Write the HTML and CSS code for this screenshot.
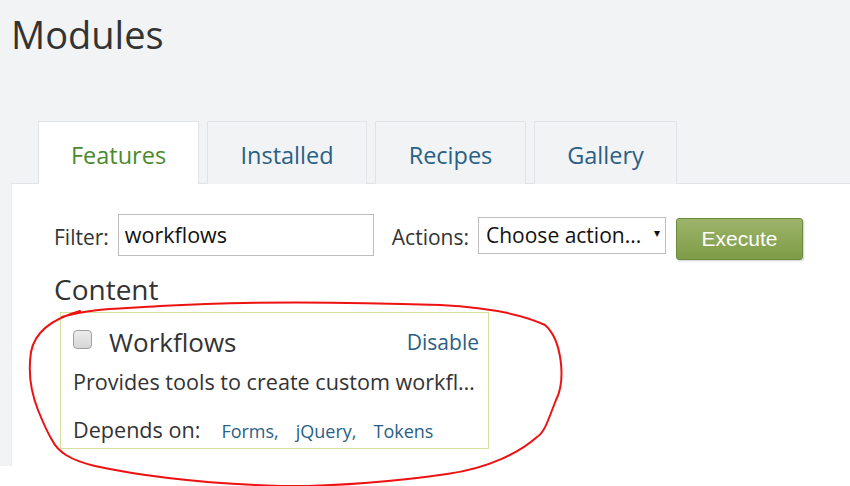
FILE: index.html
```html
<!DOCTYPE html>
<html>
<head>
<meta charset="utf-8">
<link rel="stylesheet" href="styles.css">
</head>
<body>
<div class="page">
  <h1 class="title">Modules</h1>
  <ul class="tabs">
    <li class="tab tab-features active">Features</li>
    <li class="tab tab-installed">Installed</li>
    <li class="tab tab-recipes">Recipes</li>
    <li class="tab tab-gallery">Gallery</li>
  </ul>
  <div class="panel">
    <div class="toolbar">
      <label class="lbl">Filter:</label>
      <div class="input">workflows</div>
      <label class="lbl lbl-actions">Actions:</label>
      <div class="select"><span>Choose action...</span><span class="caret">&#9662;</span></div>
      <button class="btn">Execute</button>
    </div>
    <h2 class="cat">Content</h2>
    <div class="card">
      <div class="card-head">
        <span class="check"></span>
        <span class="name">Workflows</span>
        <a class="disable">Disable</a>
      </div>
      <p class="desc">Provides tools to create custom workfl…</p>
      <div class="deps">
        <span class="deps-lbl">Depends on:</span>
        <a class="dep">Forms,</a>
        <a class="dep">jQuery,</a>
        <a class="dep">Tokens</a>
      </div>
    </div>
  </div>
</div>
<svg class="annot" width="850" height="486" viewBox="0 0 850 486">
  <path d="M 62 317 C 90 308 120 309 160 306 C 260 300 380 303 440 305 C 500 308 530 318 545 325 C 562 340 566 380 556 400 C 548 420 545 432 537 437 C 520 452 490 468 447 474 C 400 481 330 487 280 486 C 220 484 150 478 95 466 C 70 460 58 452 52 440 C 46 430 42 420 38 410 C 30 390 28 372 31 352 C 35 330 55 318 80 311" fill="none" stroke="#ee1111" stroke-width="2" stroke-linecap="round"/>
</svg>
</body>
</html>
```
FILE: styles.css
```css
* { box-sizing: border-box; }
html, body { margin: 0; padding: 0; background: #fff; }
body {
  font-family: "Open Sans", "Noto Sans", sans-serif;
  color: #333;
  width: 850px;
  height: 486px;
  overflow: hidden;
  position: relative;
}
.page {
  background: #f1f3f5;
  height: 466px;
  padding-top: 8px;
  overflow: hidden;
}
.title {
  margin: 0 0 0 11px;
  font-weight: 400;
  font-size: 38px;
  line-height: 52px;
  color: #333;
}
.tabs {
  list-style: none;
  margin: 61px 0 0 38px;
  padding: 0;
  display: flex;
  gap: 8px;
  position: relative;
  z-index: 1;
}
.tab {
  height: 63px;
  border: 1px solid #e1e4e7;
  border-bottom: none;
  background: #f1f3f5;
  color: #2a5f86;
  font-size: 23.5px;
  line-height: 66px;
  text-align: center;
}
.tab-features { width: 161px; }
.tab-installed { width: 160px; }
.tab-recipes { width: 151px; }
.tab-gallery { width: 143px; }
.tab.active {
  background: #fff;
  color: #4a8a2e;
}
.panel {
  margin-left: 11px;
  margin-top: -1px;
  background: #fff;
  border-top: 1px solid #e1e4e7;
  border-left: 1px solid #e8eaed;
  height: 400px;
  padding: 30px 0 0 42px;
}
.toolbar {
  display: flex;
  align-items: center;
  height: 45px;
}
.lbl {
  font-size: 21px;
  color: #333;
  margin-right: 9px;
}
.lbl-actions { margin-left: 18px; }
.input {
  width: 256px;
  height: 42px;
  border: 1px solid #bdbdbd;
  font-size: 21.5px;
  line-height: 40px;
  padding-left: 6px;
  color: #111;
  margin-top: -3px;
}
.select {
  width: 188px;
  height: 37px;
  border: 1px solid #bdbdbd;
  font-size: 21px;
  line-height: 35px;
  padding-left: 7px;
  color: #111;
  display: flex;
  justify-content: space-between;
  white-space: nowrap;
  margin-top: -2px;
}
.caret {
  font-size: 12px;
  padding-right: 5px;
  line-height: 30px;
}
.btn {
  margin-left: 10px;
  width: 127px;
  height: 42px;
  border: 1px solid #6b8a3f;
  border-radius: 3px;
  background: linear-gradient(#9db46a, #7d9c47);
  color: #fff;
  font-family: "Liberation Sans", Arial, sans-serif;
  font-size: 21px;
  box-shadow: 1px 1px 2px rgba(0,0,0,0.2);
  margin-top: 4px;
  padding: 0;
}
.cat {
  margin: 13px 0 0 0;
  font-weight: 400;
  font-size: 28px;
  line-height: 34px;
  color: #333;
}
.card {
  margin: 6px 0 0 6px;
  width: 429px;
  height: 137px;
  border: 1px solid #d5e09d;
  padding: 0 9px 0 12px;
}
.card-head {
  display: flex;
  align-items: center;
  height: 55px;
  padding-top: 2px;
}
.check {
  width: 19px;
  height: 19px;
  border: 1px solid #a0a0a0;
  border-radius: 4px;
  background: linear-gradient(#ececec, #d6d6d6);
  margin-right: 17px;
  margin-top: -4px;
}
.name {
  font-size: 26px;
  color: #333;
  flex: 1;
}
.disable {
  font-size: 21px;
  color: #2a5f86;
}
.desc {
  margin: 0;
  font-size: 21.6px;
  line-height: 28px;
  white-space: nowrap;
  color: #333;
}
.deps {
  margin-top: 19px;
  display: flex;
  align-items: baseline;
}
.deps-lbl { font-size: 21.6px; margin-right: 21px; }
.dep { font-size: 18px; color: #2a5f86; margin-right: 17px; }
.annot {
  position: absolute;
  left: 0;
  top: 0;
  pointer-events: none;
}
```
